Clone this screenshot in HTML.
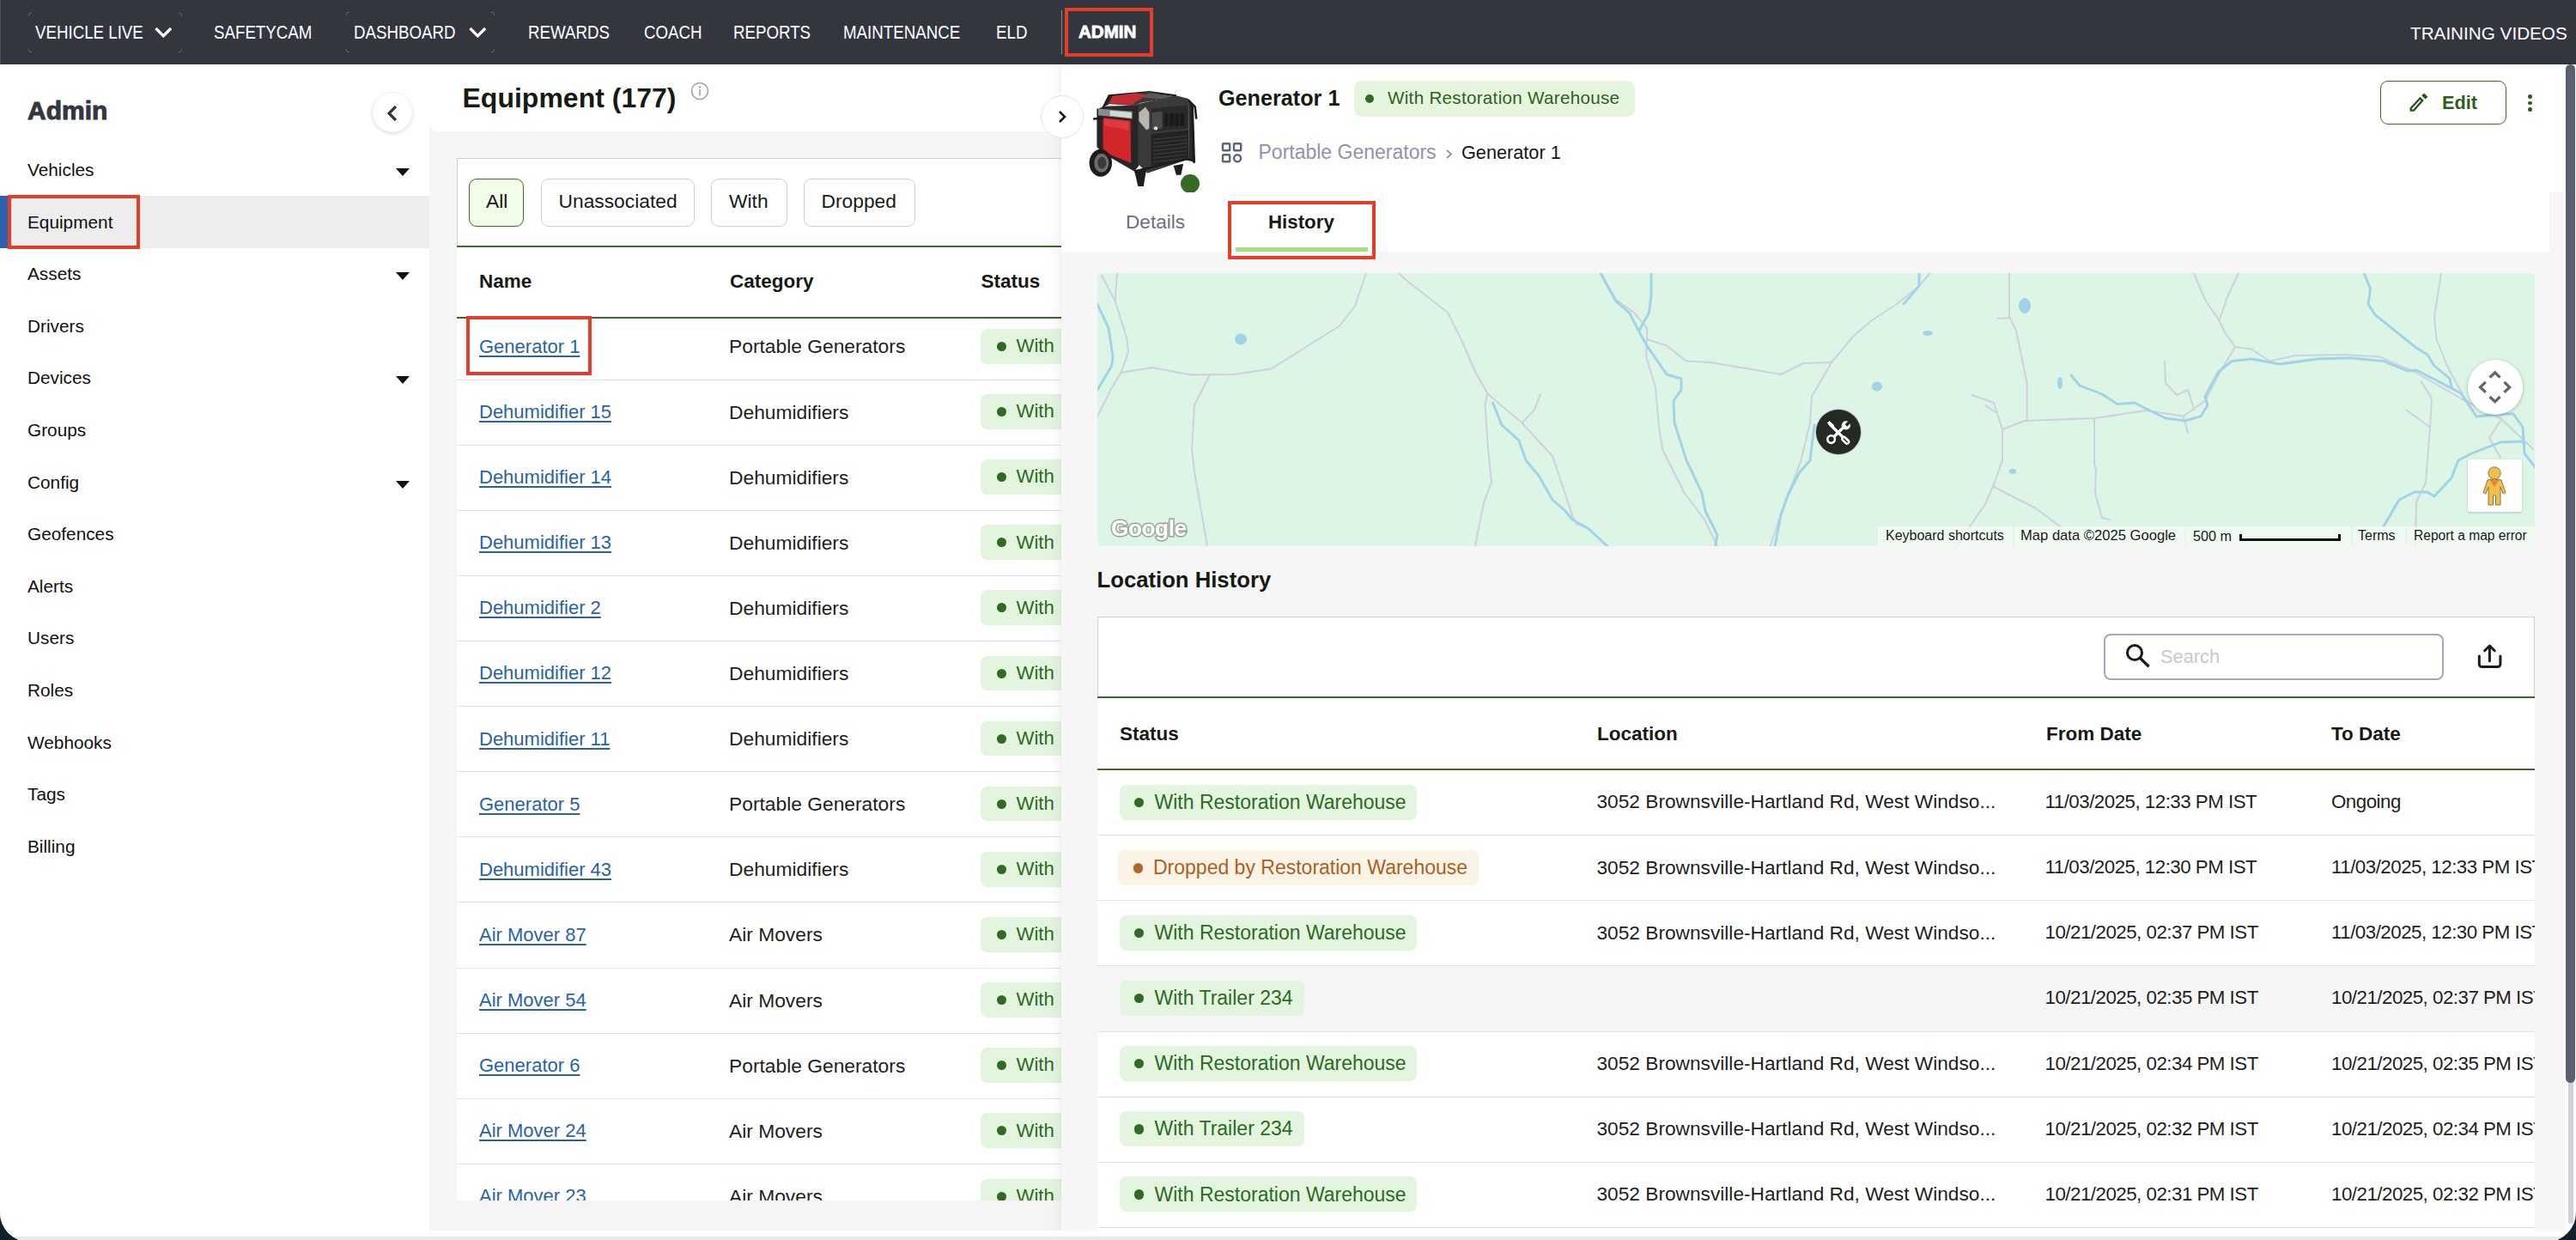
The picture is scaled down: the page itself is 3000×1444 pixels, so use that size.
<!DOCTYPE html>
<html><head><meta charset="utf-8">
<style>
*{box-sizing:border-box;margin:0;padding:0}
html,body{width:3000px;height:1444px;overflow:hidden;background:#12202a}
body{font-family:"Liberation Sans",sans-serif;position:relative;color:#1e1e1e}
.a{position:absolute}
.t{position:absolute;white-space:nowrap;line-height:1}
#win{position:absolute;left:0;top:0;width:3000px;height:1446px;background:#fff;border-radius:0 0 34px 34px;overflow:hidden}
/* nav */
#nav{position:absolute;left:0;top:0;width:3000px;height:75px;background:#33363f;border-left:1px solid #4a4d57}
.nv{position:absolute;top:28px;color:#fff;font-size:21.5px;line-height:1;white-space:nowrap;transform:scaleX(.87);transform-origin:0 0}
/* sidebar */
.si{position:absolute;left:32px;font-size:20.8px;line-height:1;color:#111;white-space:nowrap}
.tri{position:absolute;left:461px;width:0;height:0;border-left:8.5px solid transparent;border-right:8.5px solid transparent;border-top:9.5px solid #111}
/* middle */
.chip{position:absolute;top:208px;height:55.5px;border:1.5px solid #cfcfcf;border-radius:9px;background:#fff}
.chip span{position:absolute;top:14px;font-size:22.8px;line-height:1;white-space:nowrap;color:#1a1a1a}
.hd{position:absolute;font-weight:700;font-size:22.5px;line-height:1;white-space:nowrap;color:#161a14}
.row{position:absolute;left:0;width:100%;border-bottom:1.5px solid #e2e2e2}
.lnk{position:absolute;color:#2a62a8;text-decoration:underline;text-decoration-thickness:2px;text-underline-offset:3px;font-size:22px;line-height:1;white-space:nowrap}
.cell{position:absolute;font-size:22.8px;line-height:1;white-space:nowrap;color:#1e1e1e}
.bdg{position:absolute;background:#e4f5df;border-radius:8px;height:41px}
.bdg i{position:absolute;width:11px;height:11px;border-radius:50%;background:#2f6b22;top:15px}
.bdg span{position:absolute;font-size:23px;line-height:1;white-space:nowrap;color:#2b6b1f}
.dr{background:#fbf4e6}
.dr i{background:#b4652a}
.dr span{color:#a9611f}
.rb i{left:17.5px;top:15px;width:11.3px;height:11.3px}
.rb span{left:41px;top:9.2px;font-size:23px}
.rc{top:25.3px;font-size:22.7px}
.rd{top:26px;font-size:22.3px;letter-spacing:-0.5px}
.red{position:absolute;border:4px solid #e53d26}
</style></head><body>
<div id="win">

<!-- NAV -->
<div id="nav">
  <svg class="a" style="left:31px;top:14px" width="181" height="48" viewBox="0 0 181 48"><g fill="none" stroke="#6a6d76" stroke-width="0.9"><path d="M1 5 A4 4 0 0 1 5 1"/><path d="M176 1 A4 4 0 0 1 180 5"/><path d="M1 43 A4 4 0 0 0 5 47"/><path d="M176 47 A4 4 0 0 0 180 43"/></g></svg><svg class="a" style="left:401px;top:13px" width="175" height="49" viewBox="0 0 175 49"><g fill="none" stroke="#6a6d76" stroke-width="0.9"><path d="M1 5 A4 4 0 0 1 5 1"/><path d="M170 1 A4 4 0 0 1 174 5"/><path d="M1 44 A4 4 0 0 0 5 48"/><path d="M170 48 A4 4 0 0 0 174 44"/></g></svg>
  <div class="nv" style="left:40px">VEHICLE LIVE</div>
  <svg class="a" style="left:178px;top:30px" width="23" height="14" viewBox="0 0 23 14"><path d="M2.5 3 L11.3 11.8 L20.1 3" fill="none" stroke="#fff" stroke-width="3.3"/></svg>
  <div class="nv" style="left:248px">SAFETYCAM</div>
  <div class="nv" style="left:411px">DASHBOARD</div>
  <svg class="a" style="left:544px;top:30px" width="23" height="14" viewBox="0 0 23 14"><path d="M2.5 3 L11.3 11.8 L20.1 3" fill="none" stroke="#fff" stroke-width="3.3"/></svg>
  <div class="nv" style="left:614px">REWARDS</div>
  <div class="nv" style="left:749px">COACH</div>
  <div class="nv" style="left:853px">REPORTS</div>
  <div class="nv" style="left:981px">MAINTENANCE</div>
  <div class="nv" style="left:1159px">ELD</div>
  <div class="a" style="left:1234.5px;top:12px;width:1.2px;height:51px;background:#8a8c94"></div>
  <div class="t" style="left:1254.5px;top:26.3px;color:#fff;font-weight:700;font-size:21px;transform:scaleX(.98);transform-origin:0 0;-webkit-text-stroke:0.8px #fff">ADMIN</div>
  <div class="red" style="left:1238.5px;top:9px;width:103.5px;height:57px"></div>
  <div class="t" style="left:2806px;top:28.5px;color:#fff;font-size:20.7px">TRAINING VIDEOS</div>
</div>

<!-- SIDEBAR -->
<div class="a" style="left:0;top:75px;width:500px;height:1369px;background:#fff">
</div>
<div class="t" style="left:32px;top:114px;font-size:30px;font-weight:700;color:#33363f;-webkit-text-stroke:1px #33363f">Admin</div>
<div class="a" style="left:434px;top:108px;width:46px;height:46px;border-radius:50%;background:#fff;box-shadow:0 1px 4px rgba(0,0,0,.18)"></div>
<svg class="a" style="left:449px;top:122px" width="16" height="20" viewBox="0 0 16 20"><path d="M12 2 L4 10 L12 18" fill="none" stroke="#33363f" stroke-width="3.2"/></svg>
<div class="a" style="left:0;top:228px;width:500px;height:61px;background:#ededed"></div>
<div class="a" style="left:0;top:228px;width:9px;height:61px;background:#2c63b0"></div>

<div class="si" style="top:188.3px">Vehicles</div><div class="tri" style="top:195.5px"></div>
<div class="si" style="top:249.3px">Equipment</div>
<div class="si" style="top:309.3px">Assets</div><div class="tri" style="top:316.5px"></div>
<div class="si" style="top:370.3px">Drivers</div>
<div class="si" style="top:430.3px">Devices</div><div class="tri" style="top:437.5px"></div>
<div class="si" style="top:491.3px">Groups</div>
<div class="si" style="top:552.3px">Config</div><div class="tri" style="top:559.5px"></div>
<div class="si" style="top:612.3px">Geofences</div>
<div class="si" style="top:673.3px">Alerts</div>
<div class="si" style="top:733.3px">Users</div>
<div class="si" style="top:794.3px">Roles</div>
<div class="si" style="top:855.3px">Webhooks</div>
<div class="si" style="top:915.3px">Tags</div>
<div class="si" style="top:976.3px">Billing</div>
<div class="red" style="left:9px;top:227px;width:154px;height:63px"></div>

<!-- MIDDLE -->
<div class="a" style="left:500px;top:75px;width:736px;height:1358px;background:#f5f5f5"></div>
<div class="a" style="left:500px;top:1433px;width:736px;height:7px;background:#fcfcfc"></div>
<div class="a" style="left:500px;top:75px;width:736px;height:78px;background:#fff;border-radius:0 0 0 10px"></div>
<div class="t" style="left:538.5px;top:97.5px;font-size:32px;font-weight:700;color:#161a14">Equipment (177)</div>
<svg class="a" style="left:804px;top:95px" width="22" height="22" viewBox="0 0 22 22"><circle cx="11" cy="11" r="9.5" fill="none" stroke="#9ca0b8" stroke-width="1.6"/><circle cx="11" cy="6.5" r="1.2" fill="#9ca0b8"/><rect x="10.2" y="9" width="1.6" height="7.5" fill="#9ca0b8"/></svg>

<div class="a" style="left:532px;top:184px;width:704px;height:104px;background:#fff;border-top:1.5px solid #cfcfcf;border-left:1.5px solid #cfcfcf"></div>
<div class="a" style="left:532px;top:287px;width:704px;height:1111px;background:#fff"></div>
<div class="chip" style="left:546px;width:64px;border-color:#3d6b2a;background:#f1fce9"><span style="left:19px">All</span></div>
<div class="chip" style="left:629.5px;width:179px"><span style="left:20px">Unassociated</span></div>
<div class="chip" style="left:828px;width:89px"><span style="left:20px">With</span></div>
<div class="chip" style="left:936px;width:130px"><span style="left:19.5px">Dropped</span></div>
<div class="a" style="left:532px;top:286.3px;width:704px;height:1.6px;background:#3b6a2a"></div>
<div class="hd" style="left:558px;top:317px">Name</div>
<div class="hd" style="left:850px;top:317px">Category</div>
<div class="hd" style="left:1142.5px;top:317px">Status</div>
<div class="a" style="left:532px;top:369.3px;width:704px;height:1.6px;background:#3b6a2a"></div>
<div class="a" style="left:532px;top:371px;width:704px;height:1027px;overflow:hidden">
<div class="row" style="top:-4.62px;height:76.12px"><span class="lnk" style="left:26px;top:26.5px">Generator 1</span><span class="cell" style="left:317px;top:26px">Portable Generators</span><div class="bdg" style="left:610px;top:16.6px;width:120px;height:40.6px"><i style="left:18.5px"></i><span style="left:41.5px;top:9.2px;font-size:22.2px">With</span></div></div>
<div class="row" style="top:71.50px;height:76.12px"><span class="lnk" style="left:26px;top:26.5px">Dehumidifier 15</span><span class="cell" style="left:317px;top:26px">Dehumidifiers</span><div class="bdg" style="left:610px;top:16.6px;width:120px;height:40.6px"><i style="left:18.5px"></i><span style="left:41.5px;top:9.2px;font-size:22.2px">With</span></div></div>
<div class="row" style="top:147.62px;height:76.12px"><span class="lnk" style="left:26px;top:26.5px">Dehumidifier 14</span><span class="cell" style="left:317px;top:26px">Dehumidifiers</span><div class="bdg" style="left:610px;top:16.6px;width:120px;height:40.6px"><i style="left:18.5px"></i><span style="left:41.5px;top:9.2px;font-size:22.2px">With</span></div></div>
<div class="row" style="top:223.74px;height:76.12px"><span class="lnk" style="left:26px;top:26.5px">Dehumidifier 13</span><span class="cell" style="left:317px;top:26px">Dehumidifiers</span><div class="bdg" style="left:610px;top:16.6px;width:120px;height:40.6px"><i style="left:18.5px"></i><span style="left:41.5px;top:9.2px;font-size:22.2px">With</span></div></div>
<div class="row" style="top:299.86px;height:76.12px"><span class="lnk" style="left:26px;top:26.5px">Dehumidifier 2</span><span class="cell" style="left:317px;top:26px">Dehumidifiers</span><div class="bdg" style="left:610px;top:16.6px;width:120px;height:40.6px"><i style="left:18.5px"></i><span style="left:41.5px;top:9.2px;font-size:22.2px">With</span></div></div>
<div class="row" style="top:375.98px;height:76.12px"><span class="lnk" style="left:26px;top:26.5px">Dehumidifier 12</span><span class="cell" style="left:317px;top:26px">Dehumidifiers</span><div class="bdg" style="left:610px;top:16.6px;width:120px;height:40.6px"><i style="left:18.5px"></i><span style="left:41.5px;top:9.2px;font-size:22.2px">With</span></div></div>
<div class="row" style="top:452.10px;height:76.12px"><span class="lnk" style="left:26px;top:26.5px">Dehumidifier 11</span><span class="cell" style="left:317px;top:26px">Dehumidifiers</span><div class="bdg" style="left:610px;top:16.6px;width:120px;height:40.6px"><i style="left:18.5px"></i><span style="left:41.5px;top:9.2px;font-size:22.2px">With</span></div></div>
<div class="row" style="top:528.22px;height:76.12px"><span class="lnk" style="left:26px;top:26.5px">Generator 5</span><span class="cell" style="left:317px;top:26px">Portable Generators</span><div class="bdg" style="left:610px;top:16.6px;width:120px;height:40.6px"><i style="left:18.5px"></i><span style="left:41.5px;top:9.2px;font-size:22.2px">With</span></div></div>
<div class="row" style="top:604.34px;height:76.12px"><span class="lnk" style="left:26px;top:26.5px">Dehumidifier 43</span><span class="cell" style="left:317px;top:26px">Dehumidifiers</span><div class="bdg" style="left:610px;top:16.6px;width:120px;height:40.6px"><i style="left:18.5px"></i><span style="left:41.5px;top:9.2px;font-size:22.2px">With</span></div></div>
<div class="row" style="top:680.46px;height:76.12px"><span class="lnk" style="left:26px;top:26.5px">Air Mover 87</span><span class="cell" style="left:317px;top:26px">Air Movers</span><div class="bdg" style="left:610px;top:16.6px;width:120px;height:40.6px"><i style="left:18.5px"></i><span style="left:41.5px;top:9.2px;font-size:22.2px">With</span></div></div>
<div class="row" style="top:756.58px;height:76.12px"><span class="lnk" style="left:26px;top:26.5px">Air Mover 54</span><span class="cell" style="left:317px;top:26px">Air Movers</span><div class="bdg" style="left:610px;top:16.6px;width:120px;height:40.6px"><i style="left:18.5px"></i><span style="left:41.5px;top:9.2px;font-size:22.2px">With</span></div></div>
<div class="row" style="top:832.70px;height:76.12px"><span class="lnk" style="left:26px;top:26.5px">Generator 6</span><span class="cell" style="left:317px;top:26px">Portable Generators</span><div class="bdg" style="left:610px;top:16.6px;width:120px;height:40.6px"><i style="left:18.5px"></i><span style="left:41.5px;top:9.2px;font-size:22.2px">With</span></div></div>
<div class="row" style="top:908.82px;height:76.12px"><span class="lnk" style="left:26px;top:26.5px">Air Mover 24</span><span class="cell" style="left:317px;top:26px">Air Movers</span><div class="bdg" style="left:610px;top:16.6px;width:120px;height:40.6px"><i style="left:18.5px"></i><span style="left:41.5px;top:9.2px;font-size:22.2px">With</span></div></div>
<div class="row" style="top:984.94px;height:76.12px"><span class="lnk" style="left:26px;top:26.5px">Air Mover 23</span><span class="cell" style="left:317px;top:26px">Air Movers</span><div class="bdg" style="left:610px;top:16.6px;width:120px;height:40.6px"><i style="left:18.5px"></i><span style="left:41.5px;top:9.2px;font-size:22.2px">With</span></div></div>
</div>
<div class="red" style="left:543px;top:368px;width:145.5px;height:69px"></div>


<!-- RIGHT PANEL -->
<div class="a" style="left:1236px;top:75px;width:1751px;height:1365px;background:#f6f6f6;box-shadow:-3px 0 14px rgba(0,0,0,.07)"></div>
<div class="a" style="left:1236px;top:75px;width:1751px;height:218px;background:#fff"></div>
<div class="a" style="left:2969px;top:224px;width:18px;height:69px;background:#f6f6f6"></div>
<div class="a" style="left:1212px;top:110.5px;width:50px;height:50px;border-radius:50%;background:#fff;border:1px solid #e3e3e3"></div>
<svg class="a" style="left:1230px;top:127px" width="14" height="18" viewBox="0 0 14 18"><path d="M4 3 L10 9 L4 15" fill="none" stroke="#1a1a1a" stroke-width="2.6"/></svg>

<svg class="a" style="left:1262px;top:100px" width="140" height="125" viewBox="0 0 140 125"><polygon points="22.5,24.4 29.0,10.8 34.5,11.1 29.3,21.7" fill="#2a2a2a"/><polygon points="22.5,23.8 59.0,22.8 65.5,20.6 64.4,29.8 16.0,27.7" fill="#2a2a2a"/><polygon points="122.1,15.1 127.0,21.1 128.6,88.6 122.6,85.3" fill="#2a2a2a"/><path d="M23.0,24.4 L29.6,11.3 L76.4,7.0 L107.9,11.3" fill="none" stroke="#1c1c1c" stroke-width="2.2"/><polygon points="28.5,21.1 33.9,11.3 76.4,7.0 106.8,12.4 65.5,20.0 59.0,23.3" fill="#3a3a3a" /><polygon points="29.0,20.6 33.9,11.9 59.0,8.6 74.2,10.2 61.1,18.4 56.8,22.2" fill="#c42e31" /><polygon points="76.4,8.6 105.8,12.4 96.0,15.7 67.7,13.5" fill="#5a5a5a"/><polygon points="15.4,26.6 59.0,27.7 64.4,22.2 64.4,93.0 59.0,99.5 23.0,78.8 15.4,71.2" fill="#262626" /><polygon points="22.5,36.9 54.6,40.7 55.1,89.7 30.7,79.9 22.5,73.4" fill="#d3262a" /><polygon points="24.1,38.5 52.4,41.8 52.4,51.6 24.1,46.2" fill="#e24b4d" opacity=".6"/><polygon points="17.0,26.6 56.8,29.8 56.8,38.5 17.0,34.2" fill="#8a8a8a" /><polygon points="30.7,28.7 55.7,30.9 55.7,37.5 30.7,34.7" fill="#d8d8d8" /><polygon points="63.3,21.1 107.9,11.3 122.1,15.1 122.6,85.3 74.2,101.7 63.3,90.8" fill="#3a3a3a" /><polygon points="78.5,26.6 121.0,22.2 121.5,49.4 79.1,53.8" fill="#2a2a2a" /><polygon points="93.8,32.0 98.7,31.5 98.7,46.2 93.8,47.2" fill="#1a1a1a" /><polygon points="100.3,32.0 105.2,31.5 105.2,46.2 100.3,47.2" fill="#1a1a1a" /><polygon points="106.3,32.0 111.2,31.5 111.2,46.2 106.3,47.2" fill="#1a1a1a" /><polygon points="112.3,32.0 117.2,31.5 117.2,46.2 112.3,47.2" fill="#1a1a1a" /><polygon points="79.6,30.9 91.6,29.8 91.6,49.4 79.6,51.6" fill="#4a4a4a" /><circle cx="84.0" cy="49.4" r="2.2" fill="#e0e0e0"/><polygon points="78.5,56.0 122.1,51.6 122.6,85.3 78.5,93.0" fill="#232323" /><path d="M80.7,62.5 L121.0,58.1" stroke="#3f3f3f" stroke-width="1"/><path d="M80.7,66.8 L121.0,62.5" stroke="#3f3f3f" stroke-width="1"/><path d="M80.7,71.2 L121.0,66.8" stroke="#3f3f3f" stroke-width="1"/><path d="M80.7,75.5 L121.0,71.2" stroke="#3f3f3f" stroke-width="1"/><path d="M80.7,79.9 L121.0,75.5" stroke="#3f3f3f" stroke-width="1"/><path d="M80.7,84.3 L121.0,79.9" stroke="#3f3f3f" stroke-width="1"/><path d="M80.7,88.6 L121.0,84.3" stroke="#3f3f3f" stroke-width="1"/><polygon points="64.4,30.9 72.0,24.4 76.4,30.9 76.4,49.4 73.1,51.6 64.4,40.7" fill="#b9b6ae" /><path d="M126.4,23.3 L128.6,89.7" stroke="#1c1c1c" stroke-width="3"/><path d="M122.1,16.8 L129.7,24.4 L131.3,38.5" fill="none" stroke="#1c1c1c" stroke-width="2.5"/><path d="M59.0,99.5 L119.9,85.3 L129.7,87.5" fill="none" stroke="#1c1c1c" stroke-width="2.5"/><polygon points="59.0,98.4 73.1,97.3 69.8,116.9 63.3,116.9" fill="#1e1e1e" /><polygon points="104.7,93.0 116.1,90.8 113.4,103.8 107.9,103.8" fill="#1e1e1e" /><path d="M11.1,38.5 L23.0,37.5" stroke="#1c1c1c" stroke-width="2.5"/><ellipse cx="19.8" cy="89.7" rx="13.2" ry="16" fill="#1d1d1d"/><ellipse cx="20.8" cy="89.7" rx="8.5" ry="11" fill="#6d6d6d"/><ellipse cx="21.3" cy="89.7" rx="5" ry="7" fill="#3a3a3a"/></svg>
<div class="a" style="left:1375.3px;top:203.2px;width:22px;height:21px;overflow:hidden"><div style="width:22px;height:22px;border-radius:50%;background:#366b25"></div></div>
<div class="t" style="left:1419px;top:101.5px;font-size:25.2px;font-weight:700;color:#161a14">Generator 1</div>
<div class="a" style="left:1577px;top:94px;width:327px;height:41.8px;background:#e5f5de;border-radius:9px"></div>
<div class="a" style="left:1589.7px;top:109.7px;width:10px;height:10px;border-radius:50%;background:#2f6b22"></div>
<div class="t" style="left:1616px;top:103.6px;font-size:20.6px;letter-spacing:0.3px;color:#2f5f1f">With Restoration Warehouse</div>
<svg class="a" style="left:1422px;top:165px" width="25" height="25" viewBox="0 0 25 25"><g fill="none" stroke="#5f6478" stroke-width="2.4"><rect x="2" y="2.2" width="8.2" height="8" rx="0.8"/><rect x="15" y="2.2" width="8.2" height="8" rx="0.8"/><rect x="2" y="15.2" width="8.2" height="8" rx="0.8"/><circle cx="19.1" cy="19.2" r="4"/></g></svg>
<div class="t" style="left:1465.5px;top:166px;font-size:23px;color:#8f92a8">Portable Generators</div>
<svg class="a" style="left:1683px;top:172.5px" width="10" height="13" viewBox="0 0 10 13"><path d="M2 2 L7 6.5 L2 11" fill="none" stroke="#8f92a8" stroke-width="1.8"/></svg>
<div class="t" style="left:1702px;top:167px;font-size:21.7px;color:#161616">Generator 1</div>
<div class="t" style="left:1311px;top:247.5px;font-size:22.6px;color:#6e7080">Details</div>
<div class="t" style="left:1477px;top:247.7px;font-size:22.3px;font-weight:700;color:#161a14">History</div>
<div class="a" style="left:1439px;top:288px;width:154px;height:4.5px;background:#a6e07a"></div>
<div class="red" style="left:1430px;top:234px;width:172px;height:68px"></div>
<div class="a" style="left:2772px;top:94px;width:147px;height:50.5px;border:1.5px solid #3d6b2a;border-radius:9px;background:#fff"></div>
<svg class="a" style="left:2795px;top:100px" width="45" height="40" viewBox="0 0 45 40"><polygon points="12.7,26 23.5,14.4 26.2,17.1 16,28.6 12.7,28.6" fill="none" stroke="#26551a" stroke-width="2.3" stroke-linejoin="miter"/><polygon points="25.3,11.2 28,8.4 32.4,12.7 29.6,15.6" fill="#26551a"/></svg>
<div class="t" style="left:2844px;top:108.6px;font-size:21.7px;font-weight:700;color:#2e5e1e">Edit</div>
<div class="a" style="left:2944.2px;top:110.1px;width:4.5px;height:4.5px;border-radius:50%;background:#2e5e1e"></div>
<div class="a" style="left:2944.2px;top:117.5px;width:4.5px;height:4.5px;border-radius:50%;background:#2e5e1e"></div>
<div class="a" style="left:2944.2px;top:125px;width:4.5px;height:4.5px;border-radius:50%;background:#2e5e1e"></div>

<!-- MAP -->
<div class="a" id="map" style="left:1278px;top:318px;width:1674px;height:317.5px;background:#dcf5e4;border-radius:6px;overflow:hidden">
<svg width="1674" height="318" viewBox="0 0 1674 318" style="position:absolute;left:0;top:0"><g fill="none" stroke="#cfd0df" stroke-width="2" stroke-linejoin="round" stroke-linecap="round"><path d="M5.0 2.5 L20.5 32.0 L34.6 77.0 L36.0 92.0 L28.0 115.0 L15.4 136.0 L0.0 167.0"/><path d="M23.0 0.0 L20.5 32.0"/><path d="M27.0 116.0 L64.0 110.0 L108.0 118.5 L159.0 118.0 L202.5 111.5 L282.0 61.5 L300.0 38.5 L313.0 0.0"/><path d="M131.0 118.5 L113.0 154.0 L110.0 205.0 L113.0 231.0 L128.0 318.0"/><path d="M351.0 0.0 L359.0 7.7 L408.0 46.0 L426.0 82.0 L440.0 115.0 L455.0 141.0 L494.0 174.0 L530.0 213.0 L553.0 282.0 L558.0 292.0 L571.0 297.0 L594.0 318.0"/><path d="M454.0 141.0 L451.5 154.0 L455.0 205.0 L459.0 243.6 L450.0 267.0 L440.0 318.0"/><path d="M495.0 174.0 L509.0 159.0 L516.0 141.0"/><path d="M586.0 0.0 L604.0 31.0 L625.0 46.0 L640.0 64.0 L640.0 77.0 L639.0 97.0 L650.0 133.0 L654.0 179.5 L658.0 205.0 L683.6 256.0 L707.0 287.0 L722.0 318.0"/><path d="M640.0 77.0 L663.0 84.6 L686.0 102.6 L714.0 104.0 L796.0 118.0 L822.0 105.0 L855.0 104.0 L880.0 74.0 L900.5 56.0 L931.0 36.0 L957.0 15.0 L970.0 0.0"/><path d="M855.0 104.0 L832.0 143.6 L830.0 174.0 L819.5 218.0 L799.0 272.0 L783.6 318.0"/><path d="M1062.0 0.0 L1062.0 51.0 L1070.0 67.0 L1082.6 128.0 L1082.6 172.0"/><path d="M1048.0 52.6 L1062.0 52.6"/><path d="M1054.0 182.0 L1080.0 172.0 L1162.0 169.0 L1221.0 160.0 L1264.6 166.7 L1290.0 148.7 L1306.0 118.0 L1325.0 86.0"/><path d="M1018.5 142.0 L1044.0 151.0 L1054.0 182.0"/><path d="M1034.0 154.0 L1046.0 162.0"/><path d="M1054.0 182.0 L1054.0 218.0 L1044.0 246.0 L1034.0 269.0 L1000.5 318.0"/><path d="M1044.0 249.0 L1093.0 274.0 L1123.6 297.0"/><path d="M1161.0 169.0 L1161.0 223.0 L1163.0 228.0 L1162.0 256.0 L1170.0 285.0 L1178.7 287.0"/><path d="M1277.0 0.0 L1290.0 31.0 L1305.6 54.0 L1313.0 69.0 L1325.0 86.0"/><path d="M1329.0 0.0 L1316.0 28.0 L1307.0 54.0"/><path d="M1243.0 102.6 L1244.0 128.0 L1257.0 142.0 L1270.0 136.0 L1277.4 159.0"/><path d="M1325.0 86.0 L1344.0 88.5 L1365.0 102.6 L1395.0 96.0 L1454.0 95.0 L1493.0 97.4 L1534.0 115.0 L1588.0 146.0 L1634.0 169.0 L1672.0 205.0"/><path d="M1565.0 0.0 L1557.0 51.0 L1559.5 77.0 L1572.0 108.0 L1582.6 128.0 L1593.0 146.0"/><path d="M1541.5 126.0 L1554.0 146.0 L1552.0 179.5 L1547.0 243.6 L1536.0 267.0 L1535.0 318.0"/><path d="M1525.0 160.0 L1552.0 179.5"/><path d="M1634.0 172.0 L1621.0 192.0 L1634.0 215.0"/><path d="M1264.6 166.7 L1270.0 186.0"/></g><g fill="none" stroke="#9fd3ea" stroke-width="2.9" stroke-linejoin="round" stroke-linecap="round"><path d="M0.0 36.0 L13.0 64.0 L18.0 97.0 L16.7 108.0 L0.0 136.0"/><path d="M460.5 151.0 L471.0 177.0 L491.0 195.0 L499.0 218.0 L514.0 236.0 L530.0 264.0 L545.0 277.0 L553.0 287.0 L571.0 297.0 L594.0 318.0"/><path d="M645.0 0.0 L645.0 25.6 L642.6 46.0 L631.0 66.7"/><path d="M586.0 0.0 L604.0 33.0 L619.5 46.0 L630.0 66.7 L640.0 84.6 L663.0 118.0 L680.0 123.0 L680.0 136.0 L671.0 148.7 L672.0 174.0 L686.0 218.0 L704.0 256.0 L708.0 277.0 L722.0 305.0 L719.5 318.0"/><path d="M835.0 177.0 L830.0 218.0 L817.0 233.0 L804.0 259.0 L796.0 282.0 L789.0 318.0"/><path d="M957.0 0.0 L957.0 15.0 L939.0 36.0"/><path d="M1134.0 119.0 L1144.0 131.0 L1170.0 141.0 L1188.0 152.6 L1208.0 151.0 L1221.0 157.7 L1244.0 169.0 L1267.0 172.0 L1285.0 166.7 L1293.0 154.0 L1290.0 143.6 L1305.6 115.0 L1321.0 102.6 L1344.0 100.0 L1377.0 106.0 L1421.0 100.0 L1459.5 98.7 L1498.0 102.6 L1526.0 114.0 L1536.0 113.0 L1575.0 133.0 L1588.0 140.0 L1606.0 167.0 L1639.0 164.0 L1649.0 164.0 L1660.0 179.5 L1662.0 210.0 L1674.0 225.6"/><path d="M1475.0 0.0 L1482.6 18.0 L1480.0 36.0 L1488.0 48.7 L1536.0 87.0 L1549.0 95.0 L1557.0 108.0 L1575.0 123.0 L1577.0 133.0"/><path d="M1498.0 295.0 L1516.0 264.0 L1534.0 255.0 L1549.0 255.0 L1557.0 260.0 L1577.0 238.5 L1585.0 218.0 L1600.5 210.0 L1634.0 197.0 L1659.5 196.0 L1662.0 200.0"/></g><g fill="#9fd3ea"><ellipse cx="167" cy="77" rx="7" ry="6.5"/><ellipse cx="1080" cy="38" rx="7" ry="9"/><ellipse cx="908" cy="132" rx="6" ry="5.5"/><ellipse cx="967" cy="70" rx="6" ry="3"/><ellipse cx="1121" cy="128" rx="3" ry="7"/><ellipse cx="1066" cy="231" rx="4.5" ry="3"/></g><text x="16" y="305.5" font-family="Liberation Sans" font-weight="700" font-size="26" fill="#fff" stroke="#9aa39c" stroke-width="3" paint-order="stroke" letter-spacing="-0.3">Google</text></svg>
<div class="a" style="left:837px;top:159px;width:52px;height:52px;border-radius:50%;background:#252a25;box-shadow:0 0 0 1px rgba(160,150,210,.45)"></div>
<svg class="a" style="left:832px;top:152px" width="65" height="65" viewBox="0 0 65 65"><g stroke="#fff" stroke-linecap="round" fill="none"><path d="M21 24 L36 39" stroke-width="3.2"/><path d="M24 40.5 L38.5 26" stroke-width="3.4"/></g><path d="M17.8 22.6 L20.6 20.3 L26.3 25.6 L24.2 28.6 Z" fill="#fff"/><rect x="33.5" y="39.3" width="11.5" height="6.8" rx="3.4" transform="rotate(45 39.2 42.7)" fill="#fff"/><path d="M37.3 41 L41.2 44.8" stroke="#252a25" stroke-width="1.5" stroke-linecap="round"/><circle cx="22.6" cy="41.6" r="4.3" fill="#252a25" stroke="#fff" stroke-width="2.5"/><circle cx="39.8" cy="25.3" r="5.1" fill="#fff"/><polygon points="38.6,24.2 43.4,19.2 46,21.8 41.2,26.8" fill="#252a25"/></svg>
<div class="a" style="left:1595.5px;top:101px;width:64px;height:64px;border-radius:50%;background:#fff;box-shadow:0 1px 4px rgba(0,0,0,.25)"></div>
<svg class="a" style="left:1603.5px;top:109px" width="48" height="48" viewBox="0 0 48 48"><g fill="none" stroke="#666" stroke-width="3.3" stroke-linecap="butt" stroke-linejoin="miter"><path d="M17.6 12.6 L23.6 6.8 L29.6 12.6"/><path d="M17.6 35 L23.6 40.8 L29.6 35"/><path d="M12.8 17.9 L6.6 23.9 L12.8 29.9"/><path d="M34.4 17.9 L40.6 23.9 L34.4 29.9"/></g></svg>
<div class="a" style="left:1595.5px;top:216.5px;width:63.5px;height:61.5px;background:#fff;border-radius:2px;box-shadow:0 1px 3px rgba(0,0,0,.2)"></div>
<svg class="a" style="left:1609px;top:222.5px" width="36" height="52" viewBox="0 0 36 52"><g><circle cx="18" cy="10" r="7.2" fill="#f2be4a" stroke="#7a6a50" stroke-width="0.9"/><path d="M10 18 Q18 15.5 26 18 L31 32.5 L28 34 L25 26 L25 47 L19.5 47 L19.5 36 L16.5 36 L16.5 47 L11 47 L11 26 L8 34 L5 32.5 Z" fill="#f2be4a" stroke="#7a6a50" stroke-width="0.9"/><path d="M12.5 18 L18 26 L23.5 18 Z" fill="#e0883a"/></g></svg>
<div class="a" style="left:0;top:295px;width:1674px;height:23px">
<div class="a" style="left:909px;width:157px;height:23px;background:rgba(245,250,246,.75)"></div>
<div class="a" style="left:1067.5px;width:199px;height:23px;background:rgba(245,250,246,.75)"></div>
<div class="a" style="left:1268px;width:192px;height:23px;background:rgba(245,250,246,.75)"></div>
<div class="a" style="left:1461.5px;width:62px;height:23px;background:rgba(245,250,246,.75)"></div>
<div class="a" style="left:1525px;width:149px;height:23px;background:rgba(245,250,246,.75)"></div>
<div class="t" style="left:918px;top:3px;font-size:16px;color:#1a1a1a">Keyboard shortcuts</div>
<div class="t" style="left:1075px;top:3px;font-size:16.6px;color:#1a1a1a">Map data ©2025 Google</div>
<div class="t" style="left:1276px;top:3px;font-size:16.2px;color:#1a1a1a">500 m</div>
<div class="a" style="left:1330px;top:9px;width:118px;height:8px;border:3px solid #111;border-top:none"></div>
<div class="t" style="left:1468px;top:3px;font-size:16px;color:#1a1a1a">Terms</div>
<div class="t" style="left:1533px;top:3px;font-size:15.6px;color:#1a1a1a">Report a map error</div>
</div>

</div>

<div class="t" style="left:1277.5px;top:662.5px;font-size:25.7px;font-weight:700;color:#161a14">Location History</div>

<div class="a" style="left:1278px;top:718px;width:1674px;height:95px;background:#fff;border:1.5px solid #d0d0d0;border-bottom:none"></div>
<div class="a" style="left:1278px;top:811px;width:1674px;height:622px;background:#fff"></div>
<div class="a" style="left:2449.5px;top:738.3px;width:396px;height:53.3px;border:2px solid #a4a8bb;border-radius:8px;background:#fff"></div>
<svg class="a" style="left:2474px;top:748px" width="31" height="31" viewBox="0 0 31 31"><circle cx="12" cy="12" r="8.5" fill="none" stroke="#1a1c18" stroke-width="3"/><path d="M18.5 18.5 L28.6 28.2" stroke="#1a1c18" stroke-width="3.3"/></svg>
<div class="t" style="left:2516px;top:754.3px;font-size:21.8px;color:#c8c8c8">Search</div>
<svg class="a" style="left:2884px;top:749px" width="32" height="32" viewBox="0 0 32 32"><g fill="none" stroke="#1a1c18" stroke-width="3" stroke-linecap="round" stroke-linejoin="round"><path d="M15.4 20.8 V3.4"/><path d="M9.6 8.8 L15.4 3 L21.2 8.8"/><path d="M3.3 14.9 V24.4 a3.2 3.2 0 0 0 3.2 3.2 H24.7 a3.2 3.2 0 0 0 3.2 -3.2 V14.9"/></g></svg>
<div class="a" style="left:1278px;top:811.2px;width:1674px;height:1.6px;background:#3b6a2a"></div>
<div class="hd" style="left:1304px;top:844.3px">Status</div>
<div class="hd" style="left:1860px;top:844.3px">Location</div>
<div class="hd" style="left:2383px;top:844.3px">From Date</div>
<div class="hd" style="left:2715px;top:844.3px">To Date</div>
<div class="a" style="left:1278px;top:895.3px;width:1674px;height:1.6px;background:#3b6a2a"></div>
<div class="a" style="left:1278px;top:897px;width:1674px;height:536px;overflow:hidden">
<div class="row" style="top:0.10px;height:76.13px;"><div class="bdg rb" style="left:25.5px;top:16.5px;width:346.5px"><i></i><span>With Restoration Warehouse</span></div><span class="cell rc" style="left:581.5px">3052 Brownsville-Hartland Rd, West Windso...</span><span class="cell rd" style="left:1103.5px">11/03/2025, 12:33 PM IST</span><span class="cell rd" style="left:1437px">Ongoing</span></div>
<div class="row" style="top:76.23px;height:76.13px;"><div class="bdg dr rb" style="left:24px;top:17px;width:419.5px"><i></i><span>Dropped by Restoration Warehouse</span></div><span class="cell rc" style="left:581.5px">3052 Brownsville-Hartland Rd, West Windso...</span><span class="cell rd" style="left:1103.5px">11/03/2025, 12:30 PM IST</span><span class="cell rd" style="left:1437px">11/03/2025, 12:33 PM IST</span></div>
<div class="row" style="top:152.36px;height:76.13px;"><div class="bdg rb" style="left:25.5px;top:16.5px;width:346.5px"><i></i><span>With Restoration Warehouse</span></div><span class="cell rc" style="left:581.5px">3052 Brownsville-Hartland Rd, West Windso...</span><span class="cell rd" style="left:1103.5px">10/21/2025, 02:37 PM IST</span><span class="cell rd" style="left:1437px">11/03/2025, 12:30 PM IST</span></div>
<div class="row" style="top:228.49px;height:76.13px;background:#f5f5f5;"><div class="bdg rb" style="left:25.5px;top:16.5px;width:215.5px"><i></i><span>With Trailer 234</span></div><span class="cell rc" style="left:581.5px"></span><span class="cell rd" style="left:1103.5px">10/21/2025, 02:35 PM IST</span><span class="cell rd" style="left:1437px">10/21/2025, 02:37 PM IST</span></div>
<div class="row" style="top:304.62px;height:76.13px;"><div class="bdg rb" style="left:25.5px;top:16.5px;width:346.5px"><i></i><span>With Restoration Warehouse</span></div><span class="cell rc" style="left:581.5px">3052 Brownsville-Hartland Rd, West Windso...</span><span class="cell rd" style="left:1103.5px">10/21/2025, 02:34 PM IST</span><span class="cell rd" style="left:1437px">10/21/2025, 02:35 PM IST</span></div>
<div class="row" style="top:380.75px;height:76.13px;"><div class="bdg rb" style="left:25.5px;top:16.5px;width:215.5px"><i></i><span>With Trailer 234</span></div><span class="cell rc" style="left:581.5px">3052 Brownsville-Hartland Rd, West Windso...</span><span class="cell rd" style="left:1103.5px">10/21/2025, 02:32 PM IST</span><span class="cell rd" style="left:1437px">10/21/2025, 02:34 PM IST</span></div>
<div class="row" style="top:456.88px;height:76.13px;"><div class="bdg rb" style="left:25.5px;top:16.5px;width:346.5px"><i></i><span>With Restoration Warehouse</span></div><span class="cell rc" style="left:581.5px">3052 Brownsville-Hartland Rd, West Windso...</span><span class="cell rd" style="left:1103.5px">10/21/2025, 02:31 PM IST</span><span class="cell rd" style="left:1437px">10/21/2025, 02:32 PM IST</span></div>
<div class="row" style="top:533.01px;height:76.13px;"><div class="bdg rb" style="left:25.5px;top:16.5px;width:215.5px"><i></i><span>With Trailer 234</span></div><span class="cell rc" style="left:581.5px">3052 Brownsville-Hartland Rd, West Windso...</span><span class="cell rd" style="left:1103.5px">10/21/2025, 02:29 PM IST</span><span class="cell rd" style="left:1437px">10/21/2025, 02:31 PM IST</span></div>
</div>

<!-- SCROLLBAR -->
<div class="a" style="left:2991px;top:75px;width:6px;height:1350px;background:#d0d1dc;border-radius:3px"></div>
<div class="a" style="left:2988px;top:75px;width:11px;height:1186px;background:#5c5f6e;border-radius:6px"></div>
<div class="a" style="left:0;top:1433px;width:2987px;height:7px;background:#fdfdfd"></div>
<div class="a" style="left:0;top:1440px;width:3000px;height:6px;background:#e9e9e9"></div>

</div>
</body></html>
